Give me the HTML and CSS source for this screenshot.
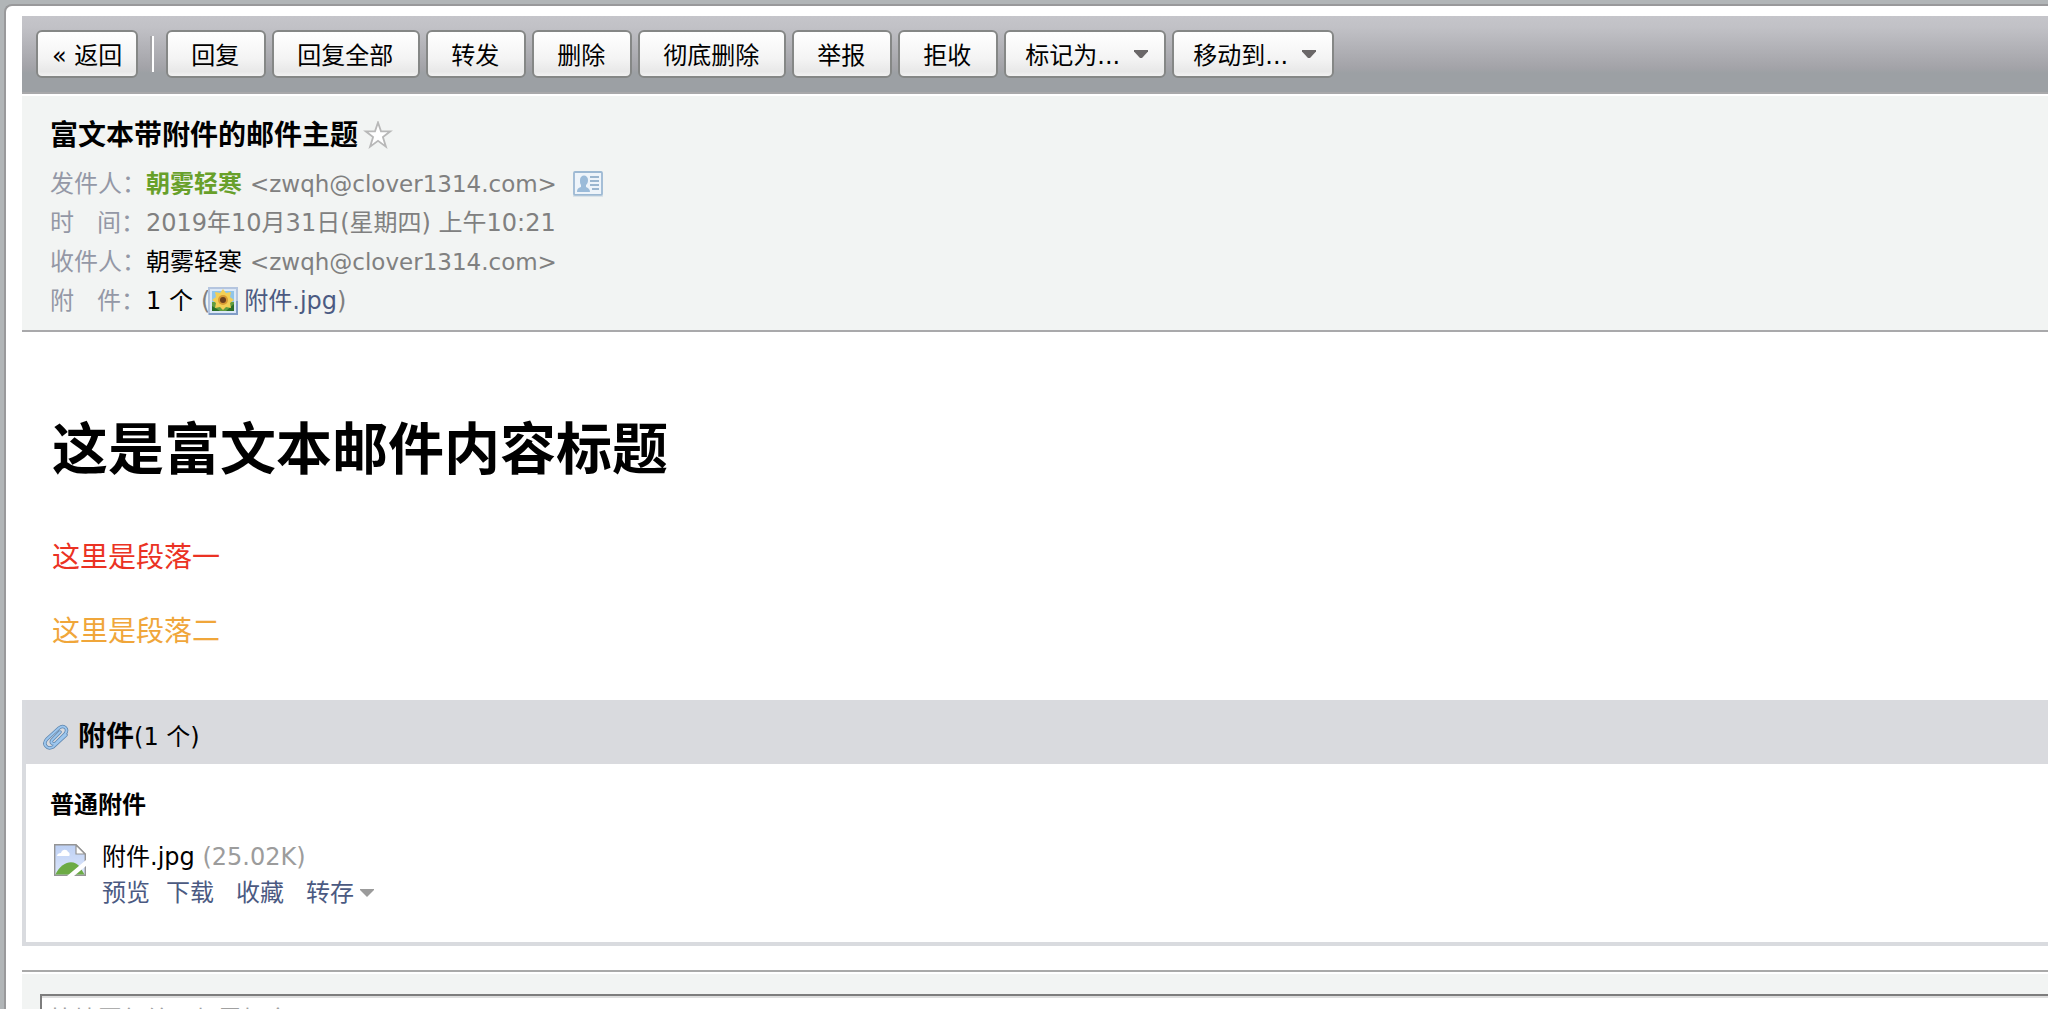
FILE: index.html
```html
<!DOCTYPE html>
<html lang="zh-CN">
<head>
<meta charset="utf-8">
<title>富文本带附件的邮件主题</title>
<link rel="stylesheet" href="styles.css">
</head>
<body>
<main class="frame">
  <div class="toolbar">
    <button type="button" class="btn btn-back">« 返回</button>
    <span class="divider"></span>
    <button type="button" class="btn">回复</button>
    <button type="button" class="btn">回复全部</button>
    <button type="button" class="btn">转发</button>
    <button type="button" class="btn">删除</button>
    <button type="button" class="btn">彻底删除</button>
    <button type="button" class="btn">举报</button>
    <button type="button" class="btn">拒收</button>
    <div class="picker">
      <select class="btn picker-select" aria-label="标记为"><option>标记为...</option></select>
      <svg class="picker-arrow" width="16" height="10" viewBox="0 0 16 10"><path d="M1 1h14v1.500L9 9H7L1 2.500z" fill="#6a6768"/></svg>
    </div>
    <div class="picker">
      <select class="btn picker-select" aria-label="移动到"><option>移动到...</option></select>
      <svg class="picker-arrow" width="16" height="10" viewBox="0 0 16 10"><path d="M1 1h14v1.500L9 9H7L1 2.500z" fill="#6a6768"/></svg>
    </div>
  </div>

  <header class="info">
    <div class="subject-row">
      <h2 class="subject">富文本带附件的邮件主题</h2>
      <svg width="30" height="30" viewBox="0 0 30 30"><path d="M15 1.500L18 10.300H27.300L19.900 16L22.900 25.700L15 19.800L7.100 25.700L10.100 16L2.700 10.300H12z" fill="#fff" stroke="#b8b8b8" stroke-width="1.800"/></svg>
    </div>
    <dl class="fields">
      <dt>发件人：</dt>
      <dd><b class="sender">朝雾轻寒</b><span class="mail">&lt;zwqh@clover1314.com&gt;</span>
        <svg class="card-icon" width="30" height="26" viewBox="0 0 30 26"><rect x="1" y="1" width="28" height="23" rx="1" fill="#eef4fa" stroke="#9db9d3" stroke-width="1.800"/><path d="M0 25h30" stroke="#c3d2df"/><path d="M7 9c0-6 8-6 8 0 0 3-1 4-2 5v2c2 1 4 2 4 5H4c0-3 1-4 4-5v-2C7 13 7 11 7 9z" fill="#9bbbd9"/><path d="M17 6h9M17 10h9M17 14h9M19 18h7" stroke="#9bb6cf" stroke-width="1.800"/></svg>
      </dd>
      <dt>时&nbsp;&nbsp;&nbsp;间：</dt>
      <dd class="date">2019年10月31日(星期四) 上午10:21</dd>
      <dt>收件人：</dt>
      <dd><span>朝雾轻寒</span><span class="mail">&lt;zwqh@clover1314.com&gt;</span></dd>
      <dt>附&nbsp;&nbsp;&nbsp;件：</dt>
      <dd><span>1 个</span><span class="paren">(</span>
        <svg class="file-icon" width="30" height="28" viewBox="0 0 30 28"><rect x="1" y="1" width="28" height="26" fill="#dce8f6" stroke="#b4c5df" stroke-width="2"/><path d="M1 27h28V14" fill="none" stroke="#819dc6" stroke-width="2"/><rect x="4" y="4" width="22" height="20" fill="#8fc5ea"/><path d="M4 15h22v9H4z" fill="#629d40"/><path d="M4 19l8 5H4zM26 17v7h-8z" fill="#2b6f28"/><path d="M15 2l3 4 5-1-1 5 4 3-4 3 1 5-5-1-3 3-3-3-5 1 1-5-4-3 4-3-1-5 5 1z" fill="#f3cf55"/><circle cx="15" cy="13" r="5" fill="#d99b35"/><circle cx="15" cy="13" r="3" fill="#6d401e"/></svg>
        <a class="link" href="#attachments">附件.jpg</a><span class="gray">)</span></dd>
    </dl>
  </header>

  <article class="content">
    <h1>这是富文本邮件内容标题</h1>
    <p class="red">这里是段落一</p>
    <p class="orange">这里是段落二</p>
  </article>

  <section class="attachments" id="attachments">
    <div class="attach-head">
      <svg width="28" height="28" viewBox="0 0 28 28" fill="none" stroke-linecap="round"><path d="M18 9l-8 8c-2 3 1 5 4 3l9-9c4-5-1-10-6-6L5 16c-5 5 0 11 6 8l13-12" stroke="#5d84ad" stroke-width="3.400"/><path d="M18 9l-8 8c-2 3 1 5 4 3l9-9c4-5-1-10-6-6L5 16c-5 5 0 11 6 8l13-12" stroke="#9cc6ee" stroke-width="1.900"/></svg>
      <h3>附件</h3><span>(1 个)</span>
    </div>
    <div class="attach-body">
      <h4>普通附件</h4>
      <div class="attach-item">
        <svg class="broken" width="32" height="32" viewBox="0 0 32 32"><defs><linearGradient id="sky" x2="0" y2="1"><stop stop-color="#bdd0f4"/><stop offset="1" stop-color="#dce6fb"/></linearGradient></defs><path d="M.7.700H22L31.300 10V31.300H.7z" fill="url(#sky)" stroke="#949494" stroke-width="1.400"/><path d="M22 1v9h9z" fill="#fff" stroke="#949494" stroke-width="1.200"/><path d="M3 12c0-2 2-3 4-3 1-4 6-4 7-1 2 0 2 4 1 4z" fill="#fff"/><path d="M1.400 30.500C8 17 20 15 26 23l4.500 7.500z" fill="#6cab45"/><path d="M13 32L32 16v6L20 32z" fill="#fff"/></svg>
        <div>
          <div class="file-name">附件.jpg <span class="size">(25.02K)</span></div>
          <nav class="actions">
            <a class="link" href="#preview">预览</a>
            <a class="link" href="#download">下载</a>
            <a class="link wide" href="#favorite">收藏</a>
            <a class="link wide" href="#save">转存<svg width="16" height="10" viewBox="0 0 16 10"><path d="M1 1h14v1L8 9 1 2z" fill="#9b9b9b"/></svg></a>
          </nav>
        </div>
      </div>
    </div>
  </section>

  <section class="quick-reply">
    <textarea class="reply-box" aria-label="快捷回复" placeholder="快捷回复给：朝雾轻寒"></textarea>
  </section>
</main>
</body>
</html>
```
FILE: styles.css
```css
* { box-sizing: border-box; }

body {
  margin: 0;
  height: 100vh;
  overflow: hidden;
  padding: 4px 0 0 4px;
  background: #b1b5b7;
  color: #000;
  font-family: "DejaVu Sans", "Noto Sans CJK SC", sans-serif;
  font-size: 24px;
  line-height: 36px;
}

h1, h2, h3, h4, p, dl, dd { margin: 0; }
svg { display: block; flex: none; }

.frame {
  min-height: 100%;
  padding: 10px 0 0 16px;
  background: #fff;
  border: 2px solid #99999b;
  border-width: 2px 0 0 2px;
  border-top-left-radius: 8px;
}

.toolbar {
  display: flex;
  align-items: flex-start;
  gap: 6px;
  height: 78px;
  padding: 14px 14px 0;
  background: linear-gradient(#c5c5ca, #c1c1c6 15%, #a3a3a8 68%, #9ca0a4 75%, #9ca0a4);
  border-bottom: 2px solid #a8a8aa;
}

.btn {
  height: 48px;
  padding: 3px 25px 0 23px;
  border: 2px solid #858786;
  border-radius: 6px;
  background: linear-gradient(#fff, #f4f4f4 60%, #e8e8e8 90%, #f2f2f2);
  color: #000;
  font: inherit;
  line-height: 36px;
  white-space: nowrap;
}

.btn-back { padding: 3px 14px 0; }

.divider {
  width: 4px;
  height: 36px;
  margin: 6px 6px 0;
  background: #fff;
  border-left: 2px solid #a3a3a6;
}

.picker { position: relative; }
.picker-select {
  width: 162px;
  padding: 3px 0 0 19px;
  appearance: none;
}
.picker-arrow {
  position: absolute;
  right: 17px;
  top: 19px;
  pointer-events: none;
}

.info {
  margin-top: 2px;
  height: 236px;
  padding: 22px 28px 0;
  background: #f2f4f3;
  border-bottom: 2px solid #a9a9ab;
}

.subject-row { display: flex; align-items: center; gap: 5px; }
.subject { font-size: 28px; line-height: 36px; }

.fields {
  display: grid;
  grid-template-columns: 96px 1fr;
  grid-auto-rows: 39px;
  align-items: center;
  margin-top: 10px;
}
dt { color: #9498a6; }
dd { display: flex; align-items: center; }
.sender { color: #68a02a; }
.mail { margin-left: 8px; color: #808080; font-size: 23px; }
.date, .gray { color: #808080; }
.paren { margin-left: 8px; color: #808080; }
.card-icon { margin-left: 16px; }
.file-icon { margin-left: -2px; margin-right: 6px; }
.link { color: #4b5a82; text-decoration: none; }

.content {
  height: 368px;
  padding: 76px 30px 0;
  font-size: 28px;
}
.content h1 { font-size: 56px; line-height: 84px; }
.content p { margin-top: 36px; line-height: 38px; }
.content h1 + p { margin-top: 47px; }
.red { color: #eb3223; }
.orange { color: #f0a63a; }

.attachments {
  border-left: 4px solid #d9dbdf;
  border-bottom: 4px solid #d9dbdf;
}
.attach-head {
  display: flex;
  align-items: center;
  height: 64px;
  padding: 10px 16px 0;
  background: #d9dade;
}
.attach-head h3 { margin-left: 8px; font-size: 28px; }
.attach-body { height: 178px; padding: 23px 24px 0; }
.attach-body h4 { font-size: 24px; }
.attach-item { display: flex; gap: 16px; margin-top: 16px; }
.broken { margin: 5px 0 0 4px; }
.size { color: #9c9c9c; }

.actions { display: flex; gap: 16px; }
.wide { display: flex; align-items: center; gap: 5px; margin-left: 6px; }

.quick-reply {
  margin-top: 24px;
  padding: 22px 0 20px 18px;
  background: #f2f4f3;
  border-top: 2px solid #a9a9a9;
  box-shadow: inset 0 2px #fff;
}
.reply-box {
  display: block;
  width: 100%;
  height: 80px;
  padding: 6px 8px;
  border: 2px solid #7d7d7d;
  border-right: 0;
  border-radius: 0;
  box-shadow: inset 0 2px #dedede;
  font: inherit;
  resize: none;
}
.reply-box::placeholder { color: #a0a0a0; }
```
